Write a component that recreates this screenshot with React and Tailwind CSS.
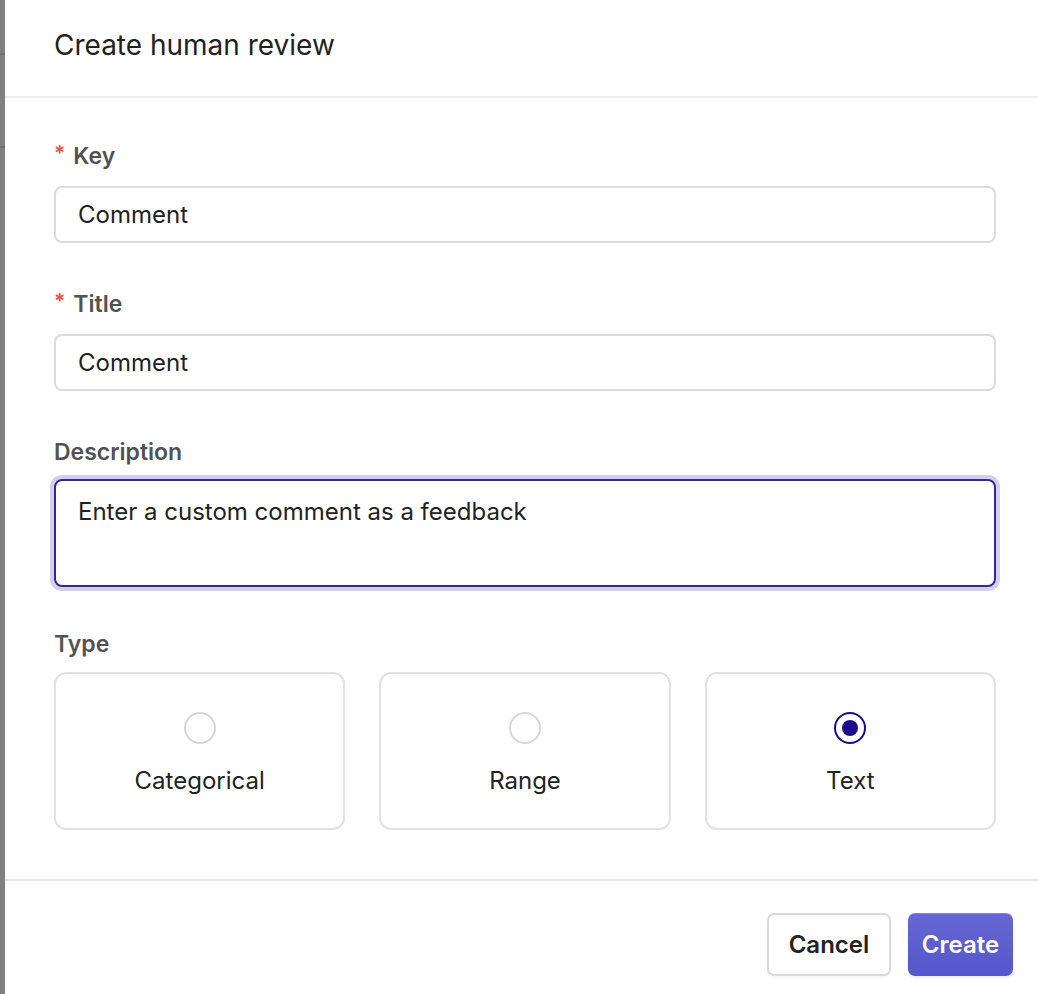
import { useState } from "react";

const types = ["Categorical", "Range", "Text"];

function Field({ label, required, children }) {
  return (
    <div className="flex flex-col">
      <label className="flex items-center h-[28px] text-[23px] font-semibold text-[#525252] mb-[16px]">
        {required && <span className="text-[#e5534b] mr-[8px] text-[21px] leading-none -mt-[6px]">*</span>}
        {label}
      </label>
      {children}
    </div>
  );
}

export default function App() {
  const [type, setType] = useState("Text");

  return (
    <div className="flex w-[1038px] h-[994px] overflow-hidden bg-white text-[#222]" style={{ fontFamily: "Inter, 'Noto Sans', sans-serif" }}>
      <div className="w-[5px] shrink-0 bg-[#808080] flex flex-col">
        <div className="h-[53px]" />
        <div className="h-[2px] bg-[#6f6f6f]" />
        <div className="h-[91px]" />
        <div className="h-[2px] bg-[#6f6f6f]" />
      </div>

      <div className="flex-1 flex flex-col">
        <div className="h-[98px] shrink-0 border-b-2 border-[#ececec] pl-[49px] pt-[28px]">
          <h1 className="text-[28px] leading-[34px] text-[#222] font-normal">Create human review</h1>
        </div>

        <div className="pl-[49px] pr-[42px] pt-[44px] flex flex-col">
          <Field label="Key" required>
            <input
              defaultValue="Comment"
              className="h-[57px] rounded-[8px] border-2 border-[#dcdcdc] px-[22px] text-[24px] text-[#222] outline-none"
            />
          </Field>

          <div className="h-[47px]" />
          <Field label="Title" required>
            <input
              defaultValue="Comment"
              className="h-[57px] rounded-[8px] border-2 border-[#dcdcdc] px-[22px] text-[24px] text-[#222] outline-none"
            />
          </Field>

          <div className="h-[47px]" />
          <div className="flex flex-col">
            <label className="flex items-center h-[28px] text-[23px] font-semibold text-[#525252] mb-[13px]">Description</label>
            <textarea
              defaultValue="Enter a custom comment as a feedback"
              className="h-[108px] resize-none rounded-[8px] border-2 border-[#3a22a3] ring-4 ring-[#d4d0ec] px-[22px] py-[16px] text-[24px] leading-[30px] text-[#222] outline-none"
            />
          </div>

          <div className="h-[43px]" />
          <div className="flex flex-col">
            <label className="flex items-center h-[28px] text-[23px] font-semibold text-[#525252] mb-[14px]">Type</label>
            <div className="grid grid-cols-3 gap-[34px]">
              {types.map((t) => {
                const selected = t === type;
                return (
                  <button
                    key={t}
                    onClick={() => setType(t)}
                    className="h-[158px] rounded-[12px] border-2 border-[#e2e2e2] bg-white flex flex-col items-center pt-[38px]"
                  >
                    <span
                      className={`w-[32px] h-[32px] rounded-full border-2 flex items-center justify-center ${
                        selected ? "border-[#1e0a8c]" : "border-[#d6d6d6]"
                      }`}
                    >
                      {selected && <span className="w-[16px] h-[16px] rounded-full bg-[#1e0a8c]" />}
                    </span>
                    <span className="mt-[23px] text-[24px] leading-[28px] text-[#222]">{t}</span>
                  </button>
                );
              })}
            </div>
          </div>
        </div>

        <div className="mt-[49px] border-t-2 border-[#e6e6e6] flex justify-end gap-[17px] pt-[32px] pr-[25px]">
          <button className="w-[124px] h-[63px] rounded-[7px] border-2 border-[#dadada] bg-white text-[24px] font-semibold text-[#222] shadow-[0_2px_3px_rgba(0,0,0,0.04)]">
            Cancel
          </button>
          <button className="w-[105px] h-[63px] rounded-[7px] bg-gradient-to-b from-[#6667d3] to-[#5557cb] text-[24px] font-semibold text-white shadow-[inset_0_1px_0_rgba(255,255,255,0.2),0_2px_3px_rgba(0,0,0,0.08)]">
            Create
          </button>
        </div>
      </div>
    </div>
  );
}
